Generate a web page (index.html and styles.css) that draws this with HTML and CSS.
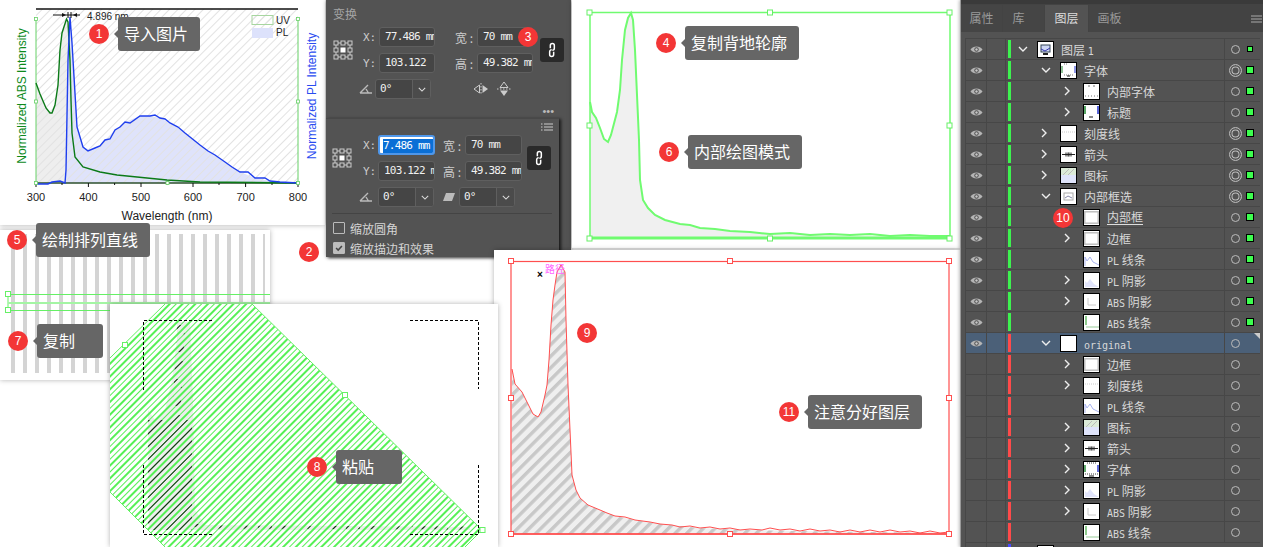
FILE: index.html
```html
<!DOCTYPE html>
<html lang="zh">
<head>
<meta charset="utf-8">
<title>图层绘图教程</title>
<link rel="stylesheet" href="styles.css">
</head>
<body>
<svg class="defs" width="0" height="0" aria-hidden="true">
  <defs>
    <pattern id="hatch-thin" patternUnits="userSpaceOnUse" width="6" height="6" patternTransform="rotate(45)"><rect width="1" height="6" fill="#e2e2e2"/></pattern>
    <pattern id="hatch-grey" patternUnits="userSpaceOnUse" width="8.2" height="8.2" patternTransform="rotate(45)"><rect width="8.2" height="8.2" fill="#efefef"/><rect width="3.4" height="8.2" fill="#c8c8c8"/></pattern>
    <pattern id="hatch-green" patternUnits="userSpaceOnUse" width="9" height="9" patternTransform="rotate(45)"><rect x="1" width="1.7" height="9" fill="#55f055" shape-rendering="crispEdges"/><rect x="5.500" width="1.7" height="9" fill="#55f055" shape-rendering="crispEdges"/></pattern>
    <pattern id="hatch-dark" patternUnits="userSpaceOnUse" width="9" height="9" patternTransform="rotate(45)"><rect x="5.500" width="1.700" height="9" fill="#142414" shape-rendering="crispEdges"/></pattern>
    <pattern id="bars" patternUnits="userSpaceOnUse" x="11" width="12" height="10"><rect width="4" height="10" fill="#d4d4d4"/></pattern>
    <mask id="dark-mask" maskUnits="userSpaceOnUse" x="110" y="304" width="388" height="243">
      <path d="M181 325L176 420" stroke="#fff" stroke-width="8" fill="none" stroke-dasharray="9 9"/>
      <path d="M148 420H192V530H148Z" fill="#fff"/>
      <path d="M192 525L215 527L470 528" stroke="#fff" stroke-width="3" fill="none" stroke-dasharray="14 8"/>
    </mask>

    <symbol id="eye" viewBox="0 0 13 9"><path d="M.5 4.500C3 .5 10 .5 12.500 4.500C10 8.500 3 8.500 .5 4.500Z" fill="#b5b5b5"/><circle cx="6.500" cy="4.500" r="2.200" fill="#535353"/><circle cx="6.500" cy="4.500" r="1.200" fill="#c8c8c8"/></symbol>
    <symbol id="down" viewBox="0 0 10 6"><path d="M1 1L5 5L9 1" fill="none" stroke="#eee" stroke-width="1.4"/></symbol>
    <symbol id="right" viewBox="0 0 6 10"><path d="M1 1L5 5L1 9" fill="none" stroke="#eee" stroke-width="1.4"/></symbol>
    <symbol id="chev-small" viewBox="0 0 10 6"><path d="M1 1L5 5L9 1" fill="none" stroke="#ddd" stroke-width="1.3"/></symbol>
    <symbol id="ref-grid" viewBox="0 0 20 20"><g fill="none" stroke="#ccc"><rect x="1" y="1" width="4" height="4"/><rect x="8" y="1" width="4" height="4"/><rect x="15" y="1" width="4" height="4"/><rect x="1" y="8" width="4" height="4"/><rect x="15" y="8" width="4" height="4"/><rect x="1" y="15" width="4" height="4"/><rect x="8" y="15" width="4" height="4"/><rect x="15" y="15" width="4" height="4"/><path d="M5 3H8M12 3H15M5 17H8M12 17H15M3 5V8M3 12V15M17 5V8M17 12V15"/></g><rect x="7.500" y="7.500" width="5" height="5" fill="#fff"/></symbol>
    <symbol id="link" viewBox="0 0 12 18"><path d="M4 7V3.500a2.400 2.400 0 0 1 4.800 0V7a2.400 2.400 0 0 1-2.400 2.400M8 11v3.500a2.400 2.400 0 0 1-4.800 0V11a2.400 2.400 0 0 1 2.400-2.400" fill="none" stroke="#fff" stroke-width="1.800"/></symbol>
    <symbol id="angle" viewBox="0 0 14 10"><path d="M1 9H13M1 9L9 1M7 5L9.500 9" fill="none" stroke="#bbb" stroke-width="1.400"/></symbol>
    <symbol id="shear" viewBox="0 0 14 10"><path d="M4 1H13L10 9H1Z" fill="#bbb"/></symbol>

    <symbol id="t-layer" viewBox="0 0 15 15"><rect x="3" y="3" width="9" height="7" fill="#ccd6f5" stroke="#345"/><path d="M5 11H10V13H5Z" fill="#222"/><path d="M3 7L7 9L12 6" stroke="#33a" fill="none"/></symbol>
    <symbol id="t-font" viewBox="0 0 15 15"><path d="M1 3V10" stroke="#283"/><path d="M14 3V10" stroke="#23c"/><path d="M3 1H7M3 12H12" stroke="#777" stroke-dasharray="1 1"/><path d="M6 13H9" stroke="#111"/></symbol>
    <symbol id="t-inner" viewBox="0 0 15 15"><path d="M4 2H6M9 2H11" stroke="#777"/><path d="M1 12H14" stroke="#777" stroke-dasharray="1 2"/></symbol>
    <symbol id="t-title" viewBox="0 0 15 15"><path d="M1 1V9" stroke="#283" stroke-width="1.500"/><path d="M14 1V9" stroke="#23c" stroke-width="1.500"/><path d="M5 12H9" stroke="#111"/></symbol>
    <symbol id="t-ticks" viewBox="0 0 15 15"><path d="M1 6H14" stroke="#ccc" stroke-dasharray="1 1"/></symbol>
    <symbol id="t-arrow" viewBox="0 0 15 15"><path d="M1 7.500H14" stroke="#222"/><path d="M5 5.500V9.500M7 5.500V9.500M8 5.500V9.500M10 5.500V9.500" stroke="#222"/></symbol>
    <symbol id="t-legend" viewBox="0 0 15 15"><rect width="15" height="7" fill="#dcebd8"/><rect y="7" width="15" height="8" fill="#dfe4fb"/><path d="M2 7L8 1M7 7L13 1" stroke="#bbb"/></symbol>
    <symbol id="t-sel" viewBox="0 0 15 15"><rect x="3" y="4" width="9" height="7" fill="none" stroke="#aaa"/><path d="M4 9L7 7L11 9" stroke="#88a" fill="none"/></symbol>
    <symbol id="t-frame" viewBox="0 0 15 15"><rect x=".8" y="1.800" width="13.400" height="11.400" fill="none" stroke="#bbb" stroke-width="1.400"/></symbol>
    <symbol id="t-plline" viewBox="0 0 15 15"><path d="M1 14V5L3 9L6 5L9 10L13 12L15 13" fill="none" stroke="#aab4f0"/></symbol>
    <symbol id="t-plshade" viewBox="0 0 15 15"><path d="M1 14V8L3 10L6 6L10 11L15 14Z" fill="#e1e4fb"/></symbol>
    <symbol id="t-absshade" viewBox="0 0 15 15"><path d="M4 4V11H12" fill="none" stroke="#ccc"/></symbol>
    <symbol id="t-absline" viewBox="0 0 15 15"><path d="M2 1V10" stroke="#4a4" stroke-width="1.200"/><path d="M2 12H15" stroke="#9c9"/></symbol>
    <symbol id="t-fontall" viewBox="0 0 15 15"><path d="M1 3V10" stroke="#283" stroke-width="1.400"/><path d="M14 3V10" stroke="#23c" stroke-width="1.400"/><path d="M3 1H12M1 12H14" stroke="#444" stroke-dasharray="1 1"/><path d="M5 14H10" stroke="#111"/></symbol>
  </defs>
</svg>

<main class="canvas">

  <section class="shot shot-chart">
    <svg viewBox="0 0 325 225" width="325" height="225">
      <path d="M36 183V83L40 94L46 108L50 113L52 113L55 105L58 85L60 50L62 33L66.500 19L68 22L70 60L71 100L72 183Z" fill="#eeeeee"/>
      <path d="M66 183L68 60L70 17L72 43L77 127L83 147L90 150L100 145L105 140L115 130L125 122L140 116L150 116L160 118L170 123L185 133L200 145L215 155L225 162L240 172L255 178L270 181L298 183Z" fill="#dfe3fb"/>
      <rect x="36" y="9" width="262" height="174" fill="url(#hatch-thin)"/>
      <path d="M36 9H298" stroke="#111" stroke-width="1.500"/>
      <path d="M36 19V183M298 19V183M36 183H298" stroke="#66d066" stroke-width="1"/>
      <path d="M36 183H298" stroke="#111"/>
      <path d="M36 183v4M62 183v2M88.400 183v4M114.600 183v2M141 183v4M167 183v2M193 183v4M219 183v2M245.600 183v4M272 183v2M298 183v4" stroke="#111"/>
      <path d="M36 83L40 94L46 108L50 113L52 113L55 105L58 85L60 50L62 33L66.500 19L68 22L70 60L71 100L72 133L75 157L83 167L100 172L117 175L167 180L200 182L298 183" fill="none" stroke="#0b7a18" stroke-width="1.400"/>
      <path d="M36 184L48 184L52 182L60 181L65 183L66 170L68 60L70 17L72 43L77 127L83 147L88 151L95 148L100 146L105 140L110 139L115 130L120 127L125 122L130 123L140 116L150 116L155 115L160 118L165 119L170 123L178 127L185 133L195 141L200 145L208 151L215 155L225 162L232 167L240 172L248 172L255 178L265 178L270 181L280 182L298 183" fill="none" stroke="#1f3fee" stroke-width="1.400"/>
      <path d="M53 15H66M80 15H66M68 12V18M71 12V18" stroke="#111"/>
      <path d="M62 13L66 15L62 17ZM77 13L73 15L77 17Z" fill="#111"/>
      <text class="ct-small" x="87" y="20">4.896 nm</text>
      <rect x="252" y="15.500" width="21" height="9" fill="url(#hatch-thin)" stroke="#a7d6a0"/>
      <rect x="252" y="28" width="21" height="10" fill="#dde2fb"/>
      <text class="ct-small" x="276" y="24">UV</text>
      <text class="ct-small" x="276" y="36">PL</text>
      <g class="ct-axis">
        <text x="36" y="201">300</text><text x="88.400" y="201">400</text><text x="141" y="201">500</text><text x="193" y="201">600</text><text x="245.600" y="201">700</text><text x="298" y="201">800</text>
        <text class="ct-title" x="167" y="220">Wavelength (nm)</text>
      </g>
      <text class="ct-y ct-green" transform="translate(26 96) rotate(-90)">Normalized ABS Intensity</text>
      <text class="ct-y ct-blue" transform="translate(316 96) rotate(-90)">Normalized PL Intensity</text>
      <g class="h-green-thin">
        <rect x="34.500" y="17.500" width="3" height="3"/><rect x="296.500" y="17.500" width="3" height="3"/><rect x="34.500" y="100" width="3" height="3"/><rect x="296.500" y="100" width="3" height="3"/><rect x="34.500" y="181.500" width="3" height="3"/><rect x="166" y="181.500" width="3" height="3"/><rect x="296.500" y="181.500" width="3" height="3"/>
      </g>
    </svg>
  </section>

  <section class="shot shot-lines">
    <svg viewBox="0 230 270 150" width="270" height="150">
      <rect x="11" y="234" width="254" height="139" fill="url(#bars)"/>
      <path d="M8 294.500H270M8 310.500H270M8 294V310" stroke="#66f066" fill="none"/>
      <path d="M8 303H270" stroke="#a4f5a4" stroke-width="2"/>
      <g class="h-green"><rect x="5.500" y="291.500" width="5" height="5"/><rect x="5.500" y="307.500" width="5" height="5"/></g>
    </svg>
  </section>

  <section class="tf-panel">
    <div class="tf-top">
      <h2 class="tf-title">变换</h2>
      <div class="tf-grid tf-grid-a">
        <svg class="tf-ref"><use href="#ref-grid"/></svg>
        <span class="tf-lab">X:</span><span class="tf-in"><span class="tf-clip">77.486 mm</span></span>
        <span class="tf-lab tf-cjk">宽 :</span><span class="tf-in"><span class="tf-clip">70 mm</span></span>
        <span class="tf-link"><svg><use href="#link"/></svg></span>
        <span class="tf-lab">Y:</span><span class="tf-in"><span class="tf-clip">103.122</span></span>
        <span class="tf-lab tf-cjk">高 :</span><span class="tf-in"><span class="tf-clip">49.382 mm</span></span>
      </div>
      <div class="tf-row tf-row-a">
        <svg class="tf-ang"><use href="#angle"/></svg>
        <span class="tf-combo"><span class="tf-clip">0°</span><span class="tf-arrow"><svg><use href="#chev-small"/></svg></span></span>
        <svg class="tf-flip" viewBox="0 0 16 16"><path d="M8 2V14" stroke="#ccc" stroke-dasharray="1.500 1.500"/><path d="M6.500 4V12L1 8Z" fill="none" stroke="#ccc"/><path d="M9.500 4V12L15 8Z" fill="#ccc"/></svg>
        <svg class="tf-flip tf-flip-b" viewBox="0 0 16 16"><path d="M1 8H15" stroke="#ccc" stroke-dasharray="1.500 1.500"/><path d="M4 6.500H12L8 1Z" fill="none" stroke="#ccc"/><path d="M4 9.500H12L8 15Z" fill="#ccc"/></svg>
      </div>
      <span class="tf-dots">•••</span>
    </div>
    <div class="tf-bottom">
      <svg class="tf-menu" viewBox="0 0 12 8"><path d="M0 1H1.500M3 1H12M0 4H1.500M3 4H12M0 7H1.500M3 7H12" stroke="#ccc"/></svg>
      <div class="tf-grid tf-grid-b">
        <svg class="tf-ref"><use href="#ref-grid"/></svg>
        <span class="tf-lab">X:</span><span class="tf-in tf-active"><span class="tf-sel">7.486 mm</span></span>
        <span class="tf-lab tf-cjk">宽 :</span><span class="tf-in"><span class="tf-clip">70 mm</span></span>
        <span class="tf-link"><svg><use href="#link"/></svg></span>
        <span class="tf-lab">Y:</span><span class="tf-in"><span class="tf-clip">103.122 mm</span></span>
        <span class="tf-lab tf-cjk">高 :</span><span class="tf-in"><span class="tf-clip">49.382 mm</span></span>
      </div>
      <div class="tf-row tf-row-b">
        <svg class="tf-ang"><use href="#angle"/></svg>
        <span class="tf-combo"><span class="tf-clip">0°</span><span class="tf-arrow"><svg><use href="#chev-small"/></svg></span></span>
        <svg class="tf-ang tf-shear"><use href="#shear"/></svg>
        <span class="tf-combo"><span class="tf-clip">0°</span><span class="tf-arrow"><svg><use href="#chev-small"/></svg></span></span>
      </div>
      <div class="tf-sep"></div>
      <div class="tf-check"><span class="tf-box"></span>缩放圆角</div>
      <div class="tf-check"><span class="tf-box tf-box-on"><svg viewBox="0 0 12 12"><path d="M2.500 6L5 8.500L9.500 3.500" fill="none" stroke="#444" stroke-width="1.800"/></svg></span>缩放描边和效果</div>
    </div>
  </section>

  <section class="shot shot-outline">
    <svg viewBox="572 0 388 248" width="388" height="248">
      <path d="M590 102L592 112L596 118L600 128L604 139L608 142L611 135L617 112L620 90L622 60L625 30L628 18L631 13L633 20L635 50L637 95L639 140L640 180L643 200L648 208L655 215L665 220L680 224L700 228L730 231L770 234L830 235L950 237V238H590Z" fill="#f0f0f0"/>
      <path d="M590 102L592 112L596 118L600 128L604 139L608 142L611 135L617 112L620 90L622 60L625 30L628 18L631 13L633 20L635 50L637 95L639 140L640 180L643 200L648 208L655 215L665 220L680 224L690 225L700 228L715 229L730 231L750 232L770 234L790 233L810 235L830 234L850 235L870 234L890 236L910 235L930 236L950 236" fill="none" stroke="#70fb70" stroke-width="2"/>
      <path d="M590 12.500H950V238H590Z" fill="none" stroke="#70fb70" stroke-width="1.500"/>
      <path d="M590 238H950" stroke="#70fb70" stroke-width="3"/>
      <g class="h-green">
        <rect x="587" y="10" width="5" height="5"/><rect x="767.500" y="10" width="5" height="5"/><rect x="947" y="10" width="5" height="5"/>
        <rect x="587" y="123" width="5" height="5"/><rect x="947" y="123" width="5" height="5"/>
        <rect x="587" y="236" width="5" height="5"/><rect x="767.500" y="236" width="5" height="5"/><rect x="947" y="236" width="5" height="5"/>
      </g>
    </svg>
  </section>

  <section class="shot shot-red">
    <svg viewBox="494 250 466 297" width="466" height="297">
      <path d="M512 369L515 384L522 392L528 404L533 414L538 417L541 412L545 395L547 385L549 360L551 325L553 300L555 285L557 272L561 265L565 272L566 320L568 385L570 430L572 475L576 490L580 498L588 505L600 510L615 516L635 520L660 524L700 528L750 530L800 531L949 533V534H511Z" fill="url(#hatch-grey)"/>
      <path d="M512 369L515 384L522 392L528 404L533 414L538 417L541 412L545 395L547 385L549 360L551 325L553 300L555 285L557 272L561 265L565 272L566 320L568 385L570 430L572 475L576 490L580 498L588 505L600 510L607 513L615 516L625 517L635 520L650 522L660 524L672 525L680 527L690 526L700 528L710 527L720 529L730 528L740 530L750 529L762 530L770 528L780 530L790 529L800 531L810 529L820 531L830 530L840 532L850 530L860 532L870 530L880 532L890 530L900 532L910 531L920 533L930 531L940 533L949 532" fill="none" stroke="#ff4f4f" stroke-width="1"/>
      <rect x="511" y="261.500" width="438" height="272.500" fill="none" stroke="#ff4f4f" stroke-width="1.200"/>
      <path d="M511 534H949" stroke="#ff4f4f" stroke-width="1.500"/>
      <g class="h-red">
        <rect x="508.500" y="258.500" width="5" height="5"/><rect x="727.500" y="258.500" width="5" height="5"/><rect x="946.500" y="258.500" width="5" height="5"/>
        <rect x="508.500" y="395.500" width="5" height="5"/><rect x="946.500" y="395.500" width="5" height="5"/>
        <rect x="508.500" y="531.500" width="5" height="5"/><rect x="727.500" y="531.500" width="5" height="5"/><rect x="946.500" y="531.500" width="5" height="5"/>
      </g>
      <text class="path-label" x="545" y="273">路径</text>
      <text class="path-x" x="537" y="278">×</text>
    </svg>
  </section>

  <section class="shot shot-hatch">
    <svg viewBox="110 304 388 243" width="388" height="243">
      <path d="M148 410L155 420L165 410L172 380L177 340L177 322L190 322L193 400L195 510L205 525L470 527V530H149Z" fill="#eeeeee"/>
      <path d="M110 358L165 304H252L482 530L465 547H165L110 492Z" fill="url(#hatch-green)"/>
      <path d="M110 358L165 304M252 304L482 530M110 492L165 547M482 530L465 547" stroke="#66f066" fill="none"/>
      <path d="M110 358L165 304H252L482 530L465 547H165L110 492Z" fill="url(#hatch-dark)" mask="url(#dark-mask)"/>
      <g class="dash"><path d="M143.500 390V320.500H213M410 320.500H478.500V389M143.500 465V534.500H213M410 534.500H478.500V465"/></g>
      <g class="h-green"><rect x="122.500" y="342.500" width="5" height="5"/><rect x="342.500" y="392.500" width="5" height="5"/><rect x="480" y="527.500" width="5" height="5"/></g>
    </svg>
  </section>

  <aside class="layers">
    <nav class="tabs">
      <span class="tab">属性</span><span class="tab tab-lib">库</span><span class="tab tab-on">图层</span><span class="tab">画板</span>
      <svg class="tabs-menu" viewBox="0 0 11 8"><path d="M0 1H11M0 4H11M0 7H11" stroke="#aaa"/></svg>
    </nav>
    <ul class="rows">
      <li class="row g l0"><span class="c-eye"><svg><use href="#eye"/></svg></span><span class="c-lock"></span><span class="bar"></span><span class="chev"><svg class="i-down"><use href="#down"/></svg></span><svg class="thumb"><use href="#t-layer"/></svg><span class="name">图层 <span class="lat">1</span></span><span class="c-vis"><i class="ring"></i><i class="sq sq-s"></i></span></li>
      <li class="row g l1"><span class="c-eye"><svg><use href="#eye"/></svg></span><span class="c-lock"></span><span class="bar"></span><span class="chev"><svg class="i-down"><use href="#down"/></svg></span><svg class="thumb"><use href="#t-font"/></svg><span class="name">字体</span><span class="c-vis"><i class="ring ring2"></i><i class="sq"></i></span></li>
      <li class="row g l2"><span class="c-eye"><svg><use href="#eye"/></svg></span><span class="c-lock"></span><span class="bar"></span><span class="chev"><svg class="i-right"><use href="#right"/></svg></span><svg class="thumb"><use href="#t-inner"/></svg><span class="name">内部字体</span><span class="c-vis"><i class="ring"></i><i class="sq"></i></span></li>
      <li class="row g l2"><span class="c-eye"><svg><use href="#eye"/></svg></span><span class="c-lock"></span><span class="bar"></span><span class="chev"><svg class="i-right"><use href="#right"/></svg></span><svg class="thumb"><use href="#t-title"/></svg><span class="name">标题</span><span class="c-vis"><i class="ring"></i><i class="sq"></i></span></li>
      <li class="row g l1"><span class="c-eye"><svg><use href="#eye"/></svg></span><span class="c-lock"></span><span class="bar"></span><span class="chev"><svg class="i-right"><use href="#right"/></svg></span><svg class="thumb"><use href="#t-ticks"/></svg><span class="name">刻度线</span><span class="c-vis"><i class="ring ring2"></i><i class="sq"></i></span></li>
      <li class="row g l1"><span class="c-eye"><svg><use href="#eye"/></svg></span><span class="c-lock"></span><span class="bar"></span><span class="chev"><svg class="i-right"><use href="#right"/></svg></span><svg class="thumb"><use href="#t-arrow"/></svg><span class="name">箭头</span><span class="c-vis"><i class="ring ring2"></i><i class="sq"></i></span></li>
      <li class="row g l1"><span class="c-eye"><svg><use href="#eye"/></svg></span><span class="c-lock"></span><span class="bar"></span><span class="chev"><svg class="i-right"><use href="#right"/></svg></span><svg class="thumb"><use href="#t-legend"/></svg><span class="name">图标</span><span class="c-vis"><i class="ring ring2"></i><i class="sq"></i></span></li>
      <li class="row g l1"><span class="c-eye"><svg><use href="#eye"/></svg></span><span class="c-lock"></span><span class="bar"></span><span class="chev"><svg class="i-down"><use href="#down"/></svg></span><svg class="thumb"><use href="#t-sel"/></svg><span class="name">内部框选</span><span class="c-vis"><i class="ring ring2"></i><i class="sq"></i></span></li>
      <li class="row g l2"><span class="c-eye"><svg><use href="#eye"/></svg></span><span class="c-lock"></span><span class="bar"></span><span class="chev"></span><svg class="thumb"><use href="#t-frame"/></svg><span class="name name-u">内部框</span><span class="c-vis"><i class="ring"></i><i class="sq"></i></span></li>
      <li class="row g l2"><span class="c-eye"><svg><use href="#eye"/></svg></span><span class="c-lock"></span><span class="bar"></span><span class="chev"><svg class="i-right"><use href="#right"/></svg></span><svg class="thumb"><use href="#t-frame"/></svg><span class="name">边框</span><span class="c-vis"><i class="ring"></i><i class="sq"></i></span></li>
      <li class="row g l2"><span class="c-eye"><svg><use href="#eye"/></svg></span><span class="c-lock"></span><span class="bar"></span><span class="chev"></span><svg class="thumb"><use href="#t-plline"/></svg><span class="name"><span class="lat">PL</span> 线条</span><span class="c-vis"><i class="ring"></i><i class="sq"></i></span></li>
      <li class="row g l2"><span class="c-eye"><svg><use href="#eye"/></svg></span><span class="c-lock"></span><span class="bar"></span><span class="chev"><svg class="i-right"><use href="#right"/></svg></span><svg class="thumb"><use href="#t-plshade"/></svg><span class="name"><span class="lat">PL</span> 阴影</span><span class="c-vis"><i class="ring"></i><i class="sq"></i></span></li>
      <li class="row g l2"><span class="c-eye"><svg><use href="#eye"/></svg></span><span class="c-lock"></span><span class="bar"></span><span class="chev"><svg class="i-right"><use href="#right"/></svg></span><svg class="thumb"><use href="#t-absshade"/></svg><span class="name"><span class="lat">ABS</span> 阴影</span><span class="c-vis"><i class="ring"></i><i class="sq"></i></span></li>
      <li class="row g l2"><span class="c-eye"><svg><use href="#eye"/></svg></span><span class="c-lock"></span><span class="bar"></span><span class="chev"></span><svg class="thumb"><use href="#t-absline"/></svg><span class="name"><span class="lat">ABS</span> 线条</span><span class="c-vis"><i class="ring"></i><i class="sq"></i></span></li>
      <li class="row r l1 row-on"><span class="c-eye"><svg><use href="#eye"/></svg></span><span class="c-lock"></span><span class="bar"></span><span class="chev"><svg class="i-down"><use href="#down"/></svg></span><svg class="thumb"></svg><span class="name"><span class="lat">original</span></span><span class="c-vis"><i class="ring"></i></span></li>
      <li class="row r l2"><span class="c-eye"></span><span class="c-lock"></span><span class="bar"></span><span class="chev"><svg class="i-right"><use href="#right"/></svg></span><svg class="thumb"><use href="#t-frame"/></svg><span class="name">边框</span><span class="c-vis"><i class="ring"></i></span></li>
      <li class="row r l2"><span class="c-eye"></span><span class="c-lock"></span><span class="bar"></span><span class="chev"><svg class="i-right"><use href="#right"/></svg></span><svg class="thumb"><use href="#t-ticks"/></svg><span class="name">刻度线</span><span class="c-vis"><i class="ring"></i></span></li>
      <li class="row r l2"><span class="c-eye"></span><span class="c-lock"></span><span class="bar"></span><span class="chev"></span><svg class="thumb"><use href="#t-plline"/></svg><span class="name"><span class="lat">PL</span> 线条</span><span class="c-vis"><i class="ring"></i></span></li>
      <li class="row r l2"><span class="c-eye"></span><span class="c-lock"></span><span class="bar"></span><span class="chev"><svg class="i-right"><use href="#right"/></svg></span><svg class="thumb"><use href="#t-legend"/></svg><span class="name">图标</span><span class="c-vis"><i class="ring"></i></span></li>
      <li class="row r l2"><span class="c-eye"></span><span class="c-lock"></span><span class="bar"></span><span class="chev"><svg class="i-right"><use href="#right"/></svg></span><svg class="thumb"><use href="#t-arrow"/></svg><span class="name">箭头</span><span class="c-vis"><i class="ring"></i></span></li>
      <li class="row r l2"><span class="c-eye"></span><span class="c-lock"></span><span class="bar"></span><span class="chev"><svg class="i-right"><use href="#right"/></svg></span><svg class="thumb"><use href="#t-fontall"/></svg><span class="name">字体</span><span class="c-vis"><i class="ring"></i></span></li>
      <li class="row r l2"><span class="c-eye"></span><span class="c-lock"></span><span class="bar"></span><span class="chev"><svg class="i-right"><use href="#right"/></svg></span><svg class="thumb"><use href="#t-plshade"/></svg><span class="name"><span class="lat">PL</span> 阴影</span><span class="c-vis"><i class="ring"></i></span></li>
      <li class="row r l2"><span class="c-eye"></span><span class="c-lock"></span><span class="bar"></span><span class="chev"><svg class="i-right"><use href="#right"/></svg></span><svg class="thumb"><use href="#t-absshade"/></svg><span class="name"><span class="lat">ABS</span> 阴影</span><span class="c-vis"><i class="ring"></i></span></li>
      <li class="row r l2"><span class="c-eye"></span><span class="c-lock"></span><span class="bar"></span><span class="chev"></span><svg class="thumb"><use href="#t-absline"/></svg><span class="name"><span class="lat">ABS</span> 线条</span><span class="c-vis"><i class="ring"></i></span></li>
      <li class="row b l0"><span class="c-eye"></span><span class="c-lock"></span><span class="bar"></span><span class="chev"></span><svg class="thumb"></svg></li>
    </ul>
  </aside>

  <div class="note n1"><b class="badge">1</b><span class="tip">导入图片</span></div>
  <div class="note n5"><b class="badge">5</b><span class="tip">绘制排列直线</span></div>
  <div class="note n7"><b class="badge">7</b><span class="tip">复制</span></div>
  <div class="note n2"><b class="badge">2</b></div>
  <div class="note n3"><b class="badge">3</b></div>
  <div class="note n4"><b class="badge">4</b><span class="tip">复制背地轮廓</span></div>
  <div class="note n6"><b class="badge">6</b><span class="tip">内部绘图模式</span></div>
  <div class="note n8"><b class="badge">8</b><span class="tip">粘贴</span></div>
  <div class="note n9"><b class="badge">9</b></div>
  <div class="note n10"><b class="badge">10</b></div>
  <div class="note n11"><b class="badge">11</b><span class="tip">注意分好图层</span></div>
</main>
</body>
</html>
```

FILE: styles.css
```css
* { box-sizing: border-box; }
html, body { margin: 0; padding: 0; background: #fff; }
body { font-family: "Noto Sans CJK SC", "Liberation Sans", sans-serif; }
.defs { position: absolute; }
.canvas { position: relative; width: 1263px; height: 547px; overflow: hidden; background: #fff; }

/* windows on the free canvas */
.shot { position: absolute; background: #fff; box-shadow: 0 0 5px rgba(0, 0, 0, .3); }
.shot svg { display: block; }
.shot-chart { left: 0; top: 0; width: 325px; height: 225px; }
.shot-lines { left: 0; top: 230px; width: 270px; height: 150px; }
.shot-outline { left: 572px; top: 0; width: 388px; height: 248px; }
.shot-red { left: 494px; top: 250px; width: 466px; height: 297px; }
.shot-hatch { left: 110px; top: 304px; width: 388px; height: 243px; }

/* chart text */
.ct-small { font: 10px "Liberation Sans", sans-serif; fill: #222; }
.ct-axis text { font: 11px "Liberation Sans", sans-serif; fill: #222; text-anchor: middle; }
.ct-axis .ct-title { font-size: 12px; }
.ct-y { font: 12px "Liberation Sans", sans-serif; text-anchor: middle; }
.ct-green { fill: #0d8a1c; }
.ct-blue { fill: #2a4cf0; }

/* selection handles */
.h-green rect, .h-red rect { fill: #fff; stroke-width: 1; }
.h-green rect { stroke: #66f066; }
.h-red rect { stroke: #ff4f4f; }
.h-green-thin rect { fill: #fff; stroke: #66d066; stroke-width: .8; }
.path-label { font: 10px "Noto Sans CJK SC", sans-serif; fill: #ff66ff; }
.path-x { font: bold 10px "Liberation Sans", sans-serif; fill: #000; }
.dash path { fill: none; stroke: #000; stroke-dasharray: 3 2; }

/* transform panel */
.tf-panel { position: absolute; left: 326px; top: 0; width: 245px; height: 257px; background: #535353; color: #ccc; font-size: 12px; box-shadow: 0 0 4px rgba(0, 0, 0, .35); }
.tf-top { position: relative; height: 118px; padding: 5px 0 0 7px; }
.tf-title { margin: 0; height: 22px; font-size: 12px; font-weight: 400; line-height: 17px; color: #a5a5a5; }
.tf-grid { display: grid; grid-auto-rows: 20px; row-gap: 6px; align-items: center; }
.tf-grid-a { grid-template-columns: 30px 16px 56px 42px 56px 7px 24px; }
.tf-grid-b { grid-template-columns: 31px 15px 57px 30px 57px 5px 24px; }
.tf-ref { width: 20px; height: 20px; grid-row: 1 / span 2; grid-column: 1; }
.tf-lab { font: 11px "DejaVu Sans Mono", monospace; color: #ccc; white-space: nowrap; }
.tf-cjk { font: 12px "Noto Sans CJK SC", sans-serif; text-align: right; padding-right: 4px; }
.tf-in, .tf-combo { height: 20px; background: #454545; border: 1px solid #5f5f5f; border-radius: 3px; overflow: hidden; white-space: nowrap; font: 11px/17px "DejaVu Sans Mono", monospace; letter-spacing: -.8px; color: #f0f0f0; padding-left: 5px; }
.tf-clip { display: block; flex: 1; overflow: hidden; }
.tf-link { grid-row: 1 / span 2; grid-column: 7; width: 24px; height: 24px; background: #2a2a2a; border-radius: 3px; display: flex; align-items: center; justify-content: center; }
.tf-link svg { width: 10px; height: 16px; }
.tf-link + .tf-lab { grid-column: 2; }
.tf-active { background: #fff; border: 2px solid #4f97ea; padding: 2px 0 0 3px; line-height: 13px; }
.tf-sel { display: block; background: #0a6fd6; color: #fff; height: 14px; font: 11px/14px "DejaVu Sans Mono", monospace; letter-spacing: -.8px; }
.tf-row { display: flex; align-items: center; margin-top: 6px; height: 20px; }
.tf-row-a { padding-left: 26px; }
.tf-row-b { padding-left: 27px; }
.tf-ang { width: 14px; height: 10px; margin-right: 2px; flex: none; }
.tf-row-b .tf-ang { margin-right: 5px; }
.tf-row-b .tf-shear { margin: 0 3px 0 8px; }
.tf-combo { width: 56px; display: flex; padding-left: 4px; flex: none; }
.tf-arrow { width: 18px; border-left: 1px solid #5f5f5f; background: #4b4b4b; display: flex; align-items: center; justify-content: center; margin-top: -1px; height: 20px; }
.tf-arrow svg { width: 8px; height: 5px; }
.tf-flip { width: 16px; height: 16px; margin-left: 42px; flex: none; }
.tf-flip-b { margin-left: 7px; }
.tf-dots { position: absolute; right: 17px; bottom: 1px; font: 11px/12px "Liberation Sans", sans-serif; color: #bbb; }
.tf-bottom { position: relative; width: 233px; height: 139px; padding: 16px 0 0 6px; border-top: 1px solid #484848; box-shadow: 2px 1px 3px rgba(0, 0, 0, .7); background: #535353; }
.tf-menu { position: absolute; right: 6px; top: 4px; width: 12px; height: 8px; }
.tf-sep { height: 1px; background: #444; margin: 6px 7px 0 0; }
.tf-check { display: flex; align-items: center; gap: 5px; height: 20px; color: #d5d5d5; font-size: 12px; padding-left: 1px; }
.tf-sep + .tf-check { margin-top: 4px; }
.tf-box { width: 12px; height: 12px; border: 1px solid #bbb; border-radius: 1px; display: block; }
.tf-box-on { background: #bdbdbd; }
.tf-box svg { display: block; width: 10px; height: 10px; }

/* layers panel */
.layers { position: absolute; left: 961px; top: 0; width: 302px; height: 547px; overflow: hidden; background: #535353; box-shadow: -1px 0 0 #9a9a9a, -2px 0 3px rgba(0, 0, 0, .25); }
.tabs { display: flex; align-items: flex-end; height: 32px; padding: 1px 0 0; background: #434343; position: relative; border-top: 4px solid #3a3a3a; }
.tab { width: 41px; height: 27px; margin-right: 1px; padding-top: 4px; background: #454545; text-align: center; font-size: 12px; line-height: 18px; color: #9a9a9a; }
.tab-lib { padding-right: 10px; }
.tab-on { background: #535353; color: #ddd; width: 43px; }
.tabs-menu { position: absolute; right: 1px; top: 11px; width: 11px; height: 8px; }
.rows { list-style: none; margin: 6px 3px 0 4px; padding: 0; border-top: 1px solid #474747; border-left: 1px solid #474747; }
.row { display: flex; align-items: center; height: 21px; border-bottom: 1px solid #474747; font-size: 12px; color: #d8d8d8; }
.c-eye { width: 20px; height: 100%; flex: none; display: flex; align-items: center; justify-content: center; }
.c-eye svg { width: 13px; height: 9px; }
.c-lock { width: 20px; height: 100%; flex: none; border-left: 1px solid #474747; border-right: 1px solid #474747; }
.bar { width: 3px; height: 18px; margin-left: 2px; flex: none; }
.g .bar { background: #3df24f; }
.r .bar { background: #ff4a4a; }
.b .bar { background: #4a4aff; }
.l0 .bar { margin-right: 4px; }
.l1 .bar { margin-right: 27px; }
.l2 .bar { margin-right: 50px; }
.chev { width: 16px; height: 16px; margin-right: 6px; flex: none; display: flex; align-items: center; justify-content: center; }
.i-down { width: 10px; height: 6px; }
.i-right { width: 6px; height: 10px; margin-right: 4px; }
.thumb { width: 17px; height: 17px; flex: none; background: #fff; border: 1px solid #000; }
.name { margin-left: 7px; flex: 1; white-space: nowrap; line-height: 17px; }
.name-u { flex: 0 0 auto; margin-right: auto; border-bottom: 1px solid #ddd; line-height: 15px; }
.lat { font: 10px "DejaVu Sans Mono", monospace; }
.c-vis { width: 36px; height: 100%; flex: none; border-left: 1px solid #474747; display: flex; align-items: center; padding-left: 6px; position: relative; }
.ring { width: 9px; height: 9px; border: 1px solid #bbb; border-radius: 50%; flex: none; margin-right: 6px; }
.ring2 { width: 13px; height: 13px; margin: 0 4px 0 -2px; box-shadow: inset 0 0 0 1.500px #535353, inset 0 0 0 2.500px #bbb; }
.sq { width: 8px; height: 8px; background: #3dff4f; border: 1px solid #000; flex: none; }
.sq-s { width: 6px; height: 6px; margin-left: 1px; }
.row-on { background: #4b6078; }
.row-on .c-vis::after { content: ""; position: absolute; right: 0; top: 0; border-style: solid; border-width: 0 6px 6px 0; border-color: transparent #ccc transparent transparent; }

/* numbered notes */
.note { position: absolute; display: flex; align-items: center; }
.badge { width: 20px; height: 20px; flex: none; border-radius: 50%; background: #f33636; color: #fff; font: 400 12px/20px "Liberation Sans", sans-serif; text-align: center; }
.tip { position: relative; margin-left: 9px; min-width: 66px; height: 34px; padding: 0 12px 0 6px; background: #666; color: #fff; border-radius: 3px; font-size: 16px; line-height: 33px; white-space: nowrap; }
.tip::before { content: ""; position: absolute; left: -4px; top: 13px; border-style: solid; border-width: 4px 4px 4px 0; border-color: transparent #666 transparent transparent; }
.n1 { left: 89px; top: 17px; }
.n5 { left: 7px; top: 223px; }
.n7 { left: 8px; top: 324px; }
.n2 { left: 299px; top: 242px; }
.n3 { left: 518px; top: 27px; }
.n4 { left: 656px; top: 26px; }
.n6 { left: 659px; top: 135px; }
.n8 { left: 307px; top: 450px; }
.n9 { left: 577px; top: 323px; }
.n10 { left: 1053px; top: 208px; }
.n11 { left: 779px; top: 395px; }
```
